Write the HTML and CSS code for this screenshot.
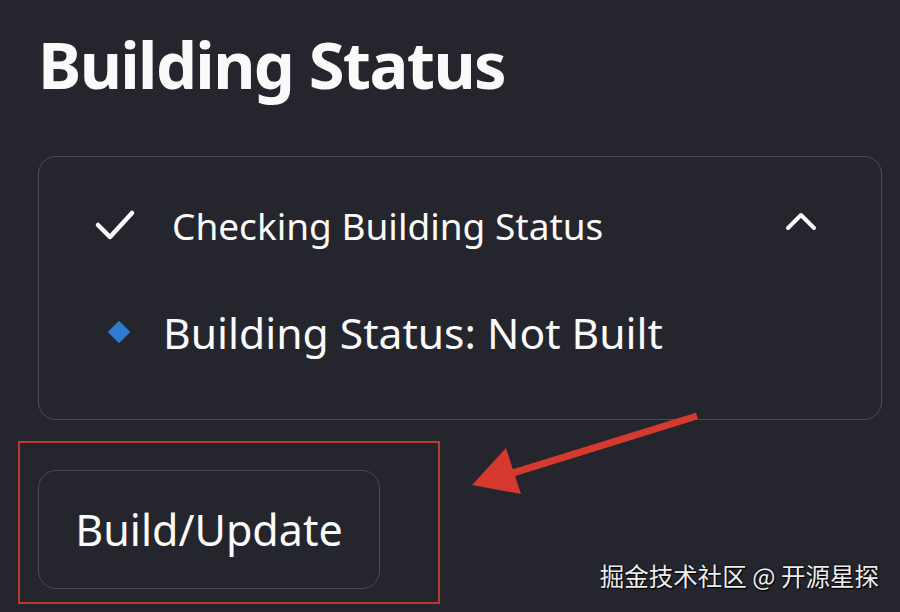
FILE: index.html
```html
<!DOCTYPE html>
<html>
<head>
    <title>Building Status</title>
    <link rel="stylesheet" href="styles.css">
</head>
<body>
    <div class="page">
        <h1 class="title">Building Status</h1>

        <div class="status-box">
            <div class="status-head">
                <svg class="check-icon" width="44" height="34" viewBox="0 0 44 34">
                    <path d="M5 16 L17 28 L39 4" fill="none" stroke="#fafafa" stroke-width="4.5" stroke-linecap="round" stroke-linejoin="round"/>
                </svg>
                <span class="status-label">Checking Building Status</span>
                <svg class="chevron" width="34" height="22" viewBox="0 0 34 22">
                    <path d="M4 17 L17 4 L30 17" fill="none" stroke="#fafafa" stroke-width="4" stroke-linecap="round" stroke-linejoin="round"/>
                </svg>
            </div>
            <div class="status-item">
                <span class="diamond"></span>
                <span class="item-text">Building Status: Not Built</span>
            </div>
        </div>

        <button class="build-btn">Build/Update</button>
    </div>

    <!-- annotation overlay -->
    <div class="highlight"></div>
    <svg class="arrow" width="900" height="612" viewBox="0 0 900 612">
        <line x1="697" y1="416" x2="500" y2="477" stroke="#d63a2f" stroke-width="7"/>
        <polygon points="472,485 506,448 521,494" fill="#d63a2f"/>
    </svg>
    <div class="watermark">掘金技术社区 @ 开源星探</div>
</body>
</html>
```

FILE: styles.css
```css
body {
    margin: 0;
    background-color: #25252d;
    color: #fafafa;
    font-family: "Noto Sans", "Open Sans", sans-serif;
    width: 900px;
    height: 612px;
    overflow: hidden;
    position: relative;
}

.page {
    padding-left: 38px;
    width: 844px;
}

.title {
    margin: 25px 0 0 0;
    font-size: 65px;
    line-height: 78px;
    font-weight: 700;
    letter-spacing: -1.6px;
}

.status-box {
    margin-top: 53px;
    border: 1.5px solid #4a4b54;
    border-radius: 18px;
    padding: 45px 63px 59px 58px;
}

.status-head {
    display: flex;
    align-items: center;
    height: 48px;
}

.check-icon {
    margin-left: -4px;
    margin-right: 35px;
}

.status-label {
    flex: 1;
    font-size: 37px;
    line-height: 48px;
}

.chevron {
    margin-top: -8px;
}

.status-item {
    display: flex;
    align-items: center;
    margin-top: 54px;
    height: 56px;
}

.diamond {
    width: 16px;
    height: 16px;
    margin-left: 14px;
    margin-right: 36px;
    background-color: #2e7bd1;
    transform: rotate(45deg);
}

.item-text {
    font-size: 42.6px;
    line-height: 56px;
}

.build-btn {
    margin-top: 50px;
    width: 342px;
    height: 119px;
    background-color: #25252d;
    color: #fafafa;
    border: 1.5px solid #4a4b54;
    border-radius: 18px;
    font-family: "Noto Sans", "Open Sans", sans-serif;
    font-size: 43px;
    padding: 0;
}

.highlight {
    position: absolute;
    left: 18px;
    top: 441px;
    width: 418px;
    height: 159px;
    border: 2px solid #bb3a30;
}

.arrow {
    position: absolute;
    left: 0;
    top: 0;
}

.watermark {
    position: absolute;
    right: 21px;
    top: 558px;
    font-family: "Noto Sans CJK SC", sans-serif;
    font-size: 24.5px;
    color: #ededed;
    text-shadow: 0 0 2px #000, 1px 1px 1px #000;
}
```
